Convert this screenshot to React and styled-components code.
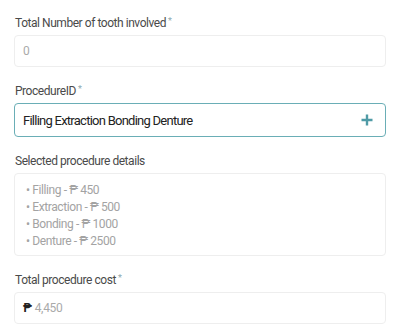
import React from 'react'
import styled, { createGlobalStyle } from 'styled-components'

const GlobalStyle = createGlobalStyle`
    body {
        margin: 0;
        background: #FFF;
        font-family: Roboto, 'Noto Sans', sans-serif;
    }
`

const Form = styled.div`
    width: 372px;
    padding: 14px 0 0 14px;
    display: flex;
    flex-direction: column;
    gap: 15px;
`

const Field = styled.div`
    display: flex;
    flex-direction: column;
    gap: 3px;
`

const Label = styled.label`
    font-size: 12px;
    line-height: 18px;
    letter-spacing: -0.45px;
    color: #4a4a4a;
    padding-left: 1px;

    sup {
        color: #8fa9ae;
        font-size: 9px;
        margin-left: 2px;
        vertical-align: 3px;
        line-height: 0;
    }
`

const Input = styled.div`
    box-sizing: border-box;
    height: ${p => p.focused ? 34 : 32}px;
    border: ${p => p.focused ? '1.5px solid #6aaeb6' : '1px solid #eee'};
    border-radius: 4px;
    padding: 0 12px 0 8px;
    display: flex;
    align-items: center;
    justify-content: space-between;
    font-size: ${p => p.focused ? 13 : 12}px;
    letter-spacing: ${p => p.focused ? -0.75 : -0.3}px;
    color: ${p => p.focused ? '#222' : '#aaa'};
`

const Details = styled.ul`
    box-sizing: border-box;
    height: 83px;
    margin: 0;
    list-style: none;
    border: 1px solid #eee;
    border-radius: 4px;
    padding: 8px 11px;
    font-size: 12px;
    line-height: 17px;
    letter-spacing: -0.4px;
    color: #a3a3a3;
`

const Peso = styled.span`
    color: #222;
    font-weight: bold;
    margin-right: 3px;
`

const items = [
    ['Filling', 450],
    ['Extraction', 500],
    ['Bonding', 1000],
    ['Denture', 2500],
]

const Plus = () => (
    <svg width="12" height="12" viewBox="0 0 12 12">
        <path d="M6 0.5v11M0.5 6h11" stroke="#4f9ba6" strokeWidth="2.4" />
    </svg>
)

export default () => {
    return (
        <>
            <GlobalStyle />
            <Form>
                <Field>
                    <Label>Total Number of tooth involved<sup>*</sup></Label>
                    <Input>0</Input>
                </Field>
                <Field>
                    <Label>ProcedureID<sup>*</sup></Label>
                    <Input focused>
                        Filling Extraction Bonding Denture
                        <Plus />
                    </Input>
                </Field>
                <Field>
                    <Label>Selected procedure details</Label>
                    <Details>
                        {items.map(([name, cost]) => (
                            <li key={name}>• {name} - ₱ {cost}</li>
                        ))}
                    </Details>
                </Field>
                <Field>
                    <Label>Total procedure cost<sup>*</sup></Label>
                    <Input><span><Peso>₱</Peso>4,450</span></Input>
                </Field>
            </Form>
        </>
    )
}
